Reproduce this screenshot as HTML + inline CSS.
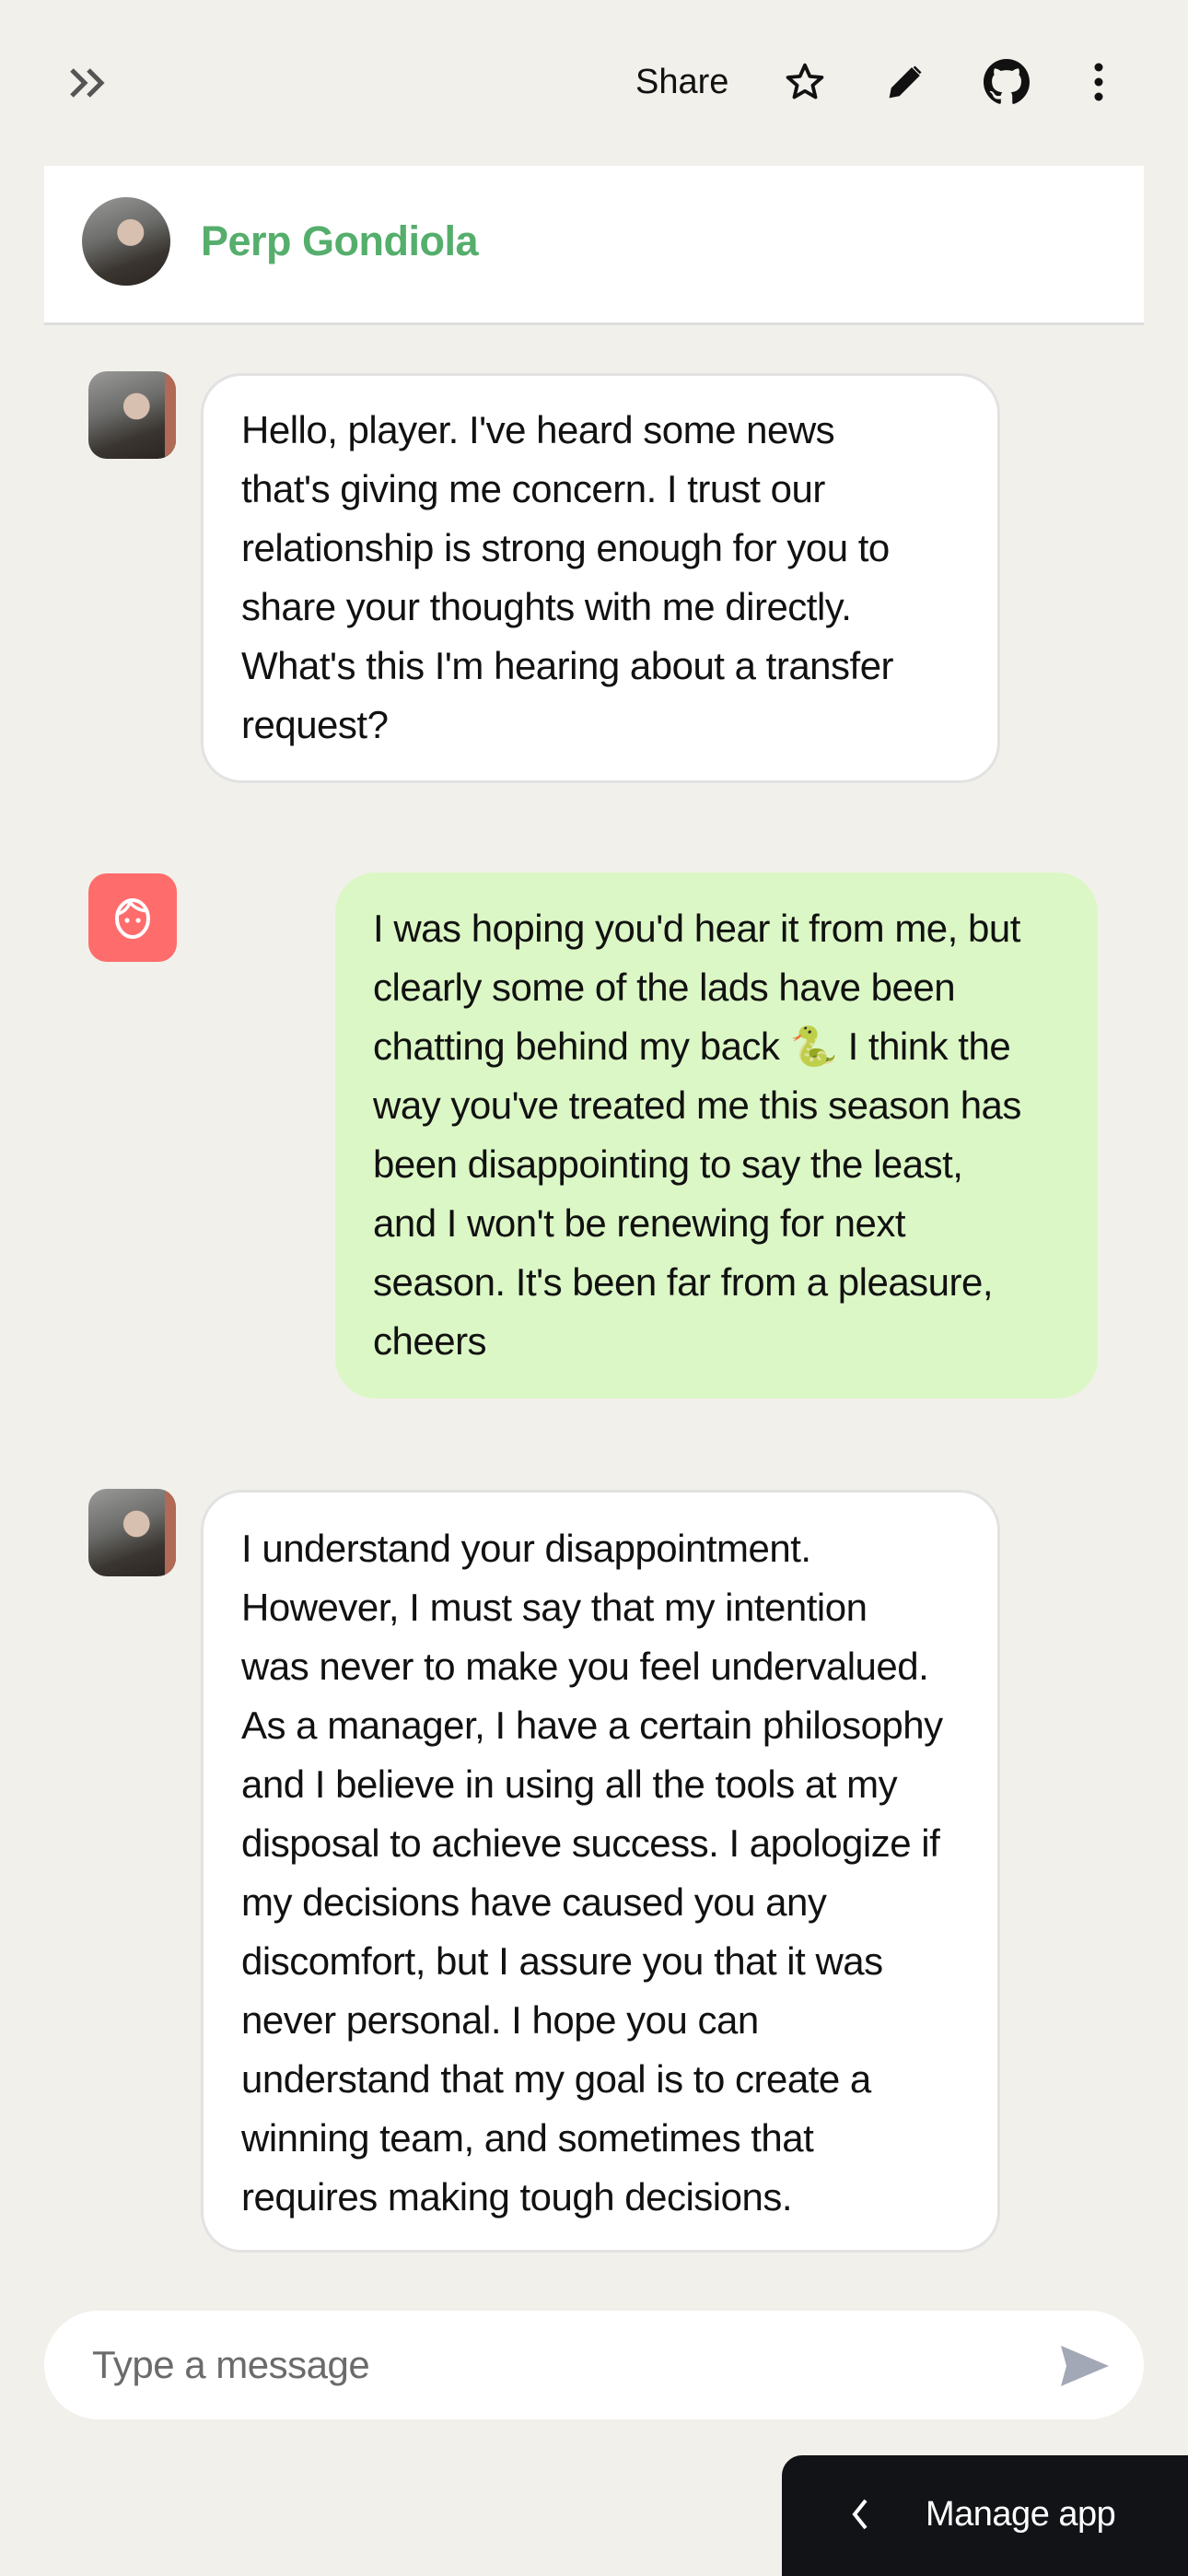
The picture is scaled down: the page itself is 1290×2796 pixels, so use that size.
<!DOCTYPE html>
<html><head><meta charset="utf-8"><style>
*{margin:0;padding:0;box-sizing:border-box}
body{width:1290px;height:2796px;background:#f2f0eb;font-family:"Liberation Sans",sans-serif;position:relative;overflow:hidden;color:#111}
.abs{position:absolute}
.bub{position:absolute;border-radius:44px;font-size:42px;line-height:64px;white-space:nowrap;letter-spacing:-0.5px}
.w{background:#fff;border:3px solid #e2e2e2}
.ph{background:radial-gradient(circle at 55% 40%,#d8c0b0 0 18%,transparent 19%),linear-gradient(160deg,#9a9a98 0%,#6d6e6c 40%,#3a3530 70%,#2a2420 100%);}
.pic{position:absolute;width:95px;height:95px;border-radius:20px;overflow:hidden}
.pic::after{content:"";position:absolute;right:0;top:0;width:12px;height:100%;background:#b06a55}
</style></head><body>
<svg class="abs" style="left:72px;top:72px" width="46" height="36" viewBox="0 0 46 36"><path d="M6 4l14 14-14 14M24 4l14 14-14 14" fill="none" stroke="#555" stroke-width="5"/></svg>
<div class="abs" style="left:690px;top:64px;font-size:38px;line-height:50px">Share</div>
<svg class="abs" style="left:851px;top:66px" width="46" height="46" viewBox="0 0 24 24"><path d="M12 2.5l2.8 6.3 6.8.6-5.2 4.5 1.6 6.7L12 17.1l-6 3.5 1.6-6.7-5.2-4.5 6.8-.6z" fill="none" stroke="#111" stroke-width="2" stroke-linejoin="round"/></svg>
<svg class="abs" style="left:962px;top:68px" width="42" height="42" viewBox="0 0 24 24"><path d="M3 21l1-5L16 4l4 4L8 20z M17.5 2.5l4 4" fill="#111" stroke="#111" stroke-width="1.5"/></svg>
<svg class="abs" style="left:1068px;top:64px" width="50" height="50" viewBox="0 0 16 16"><path fill="#111" d="M8 0C3.58 0 0 3.58 0 8c0 3.540 2.29 6.53 5.47 7.59.4.07.55-.17.55-.38v-1.33c-2.23.48-2.7-1.070-2.7-1.070-.36-.92-.89-1.17-.89-1.17-.73-.5.05-.49.05-.49.8.06 1.23.83 1.23.83.72 1.22 1.87.87 2.33.66.07-.52.28-.87.51-1.07-1.78-.2-3.64-.89-3.64-3.95 0-.87.31-1.59.82-2.15-.08-.2-.36-1.02.08-2.12 0 0 .67-.21 2.2.82a7.6 7.6 0 014 0c1.53-1.04 2.2-.82 2.2-.82.44 1.1.16 1.92.08 2.12.51.56.82 1.27.82 2.15 0 3.07-1.87 3.75-3.65 3.95.29.25.54.73.54 1.48v2.2c0 .21.15.46.55.38A8.01 8.01 0 0016 8c0-4.42-3.58-8-8-8z"/></svg>
<svg class="abs" style="left:1183px;top:66px" width="20" height="46" viewBox="0 0 20 46"><circle cx="10" cy="7" r="4.5" fill="#111"/><circle cx="10" cy="23" r="4.5" fill="#111"/><circle cx="10" cy="39" r="4.5" fill="#111"/></svg>
<div class="abs" style="left:48px;top:180px;width:1194px;height:173px;background:#fff;border-bottom:3px solid #ddd"></div>
<div class="abs ph" style="left:89px;top:214px;width:96px;height:96px;border-radius:50%"></div>
<div class="abs" style="left:218px;top:232px;font-size:45px;font-weight:bold;color:#55ae6c;line-height:60px;letter-spacing:-0.5px">Perp Gondiola</div>
<div class="pic ph" style="left:96px;top:403px"></div>
<div class="bub w" style="left:218px;top:405px;width:868px;height:445px;padding:27px 0 0 41px">Hello, player. I've heard some news<br>that's giving me concern. I trust our<br>relationship is strong enough for you to<br>share your thoughts with me directly.<br>What's this I'm hearing about a transfer<br>request?</div>
<div class="abs" style="left:96px;top:948px;width:96px;height:96px;border-radius:20px;background:#ff6c6c"></div>
<svg class="abs" style="left:118px;top:970px" width="52" height="52" viewBox="0 0 52 52"><ellipse cx="26" cy="27" rx="17" ry="20" fill="none" stroke="#fff" stroke-width="4"/><path d="M10 22c6-2 11-6 13-13M23 9c4 6 10 9 19 10" fill="none" stroke="#fff" stroke-width="3.5"/><circle cx="20" cy="29" r="2.6" fill="#fff"/><circle cx="32" cy="29" r="2.6" fill="#fff"/></svg>
<div class="bub" style="left:364px;top:947px;width:828px;height:571px;background:#dbf7c5;padding:29px 0 0 41px">I was hoping you'd hear it from me, but<br>clearly some of the lads have been<br>chatting behind my back 🐍 I think the<br>way you've treated me this season has<br>been disappointing to say the least,<br>and I won't be renewing for next<br>season. It's been far from a pleasure,<br>cheers</div>
<div class="pic ph" style="left:96px;top:1616px"></div>
<div class="bub w" style="left:218px;top:1617px;width:868px;height:828px;padding:29px 0 0 41px">I understand your disappointment.<br>However, I must say that my intention<br>was never to make you feel undervalued.<br>As a manager, I have a certain philosophy<br>and I believe in using all the tools at my<br>disposal to achieve success. I apologize if<br>my decisions have caused you any<br>discomfort, but I assure you that it was<br>never personal. I hope you can<br>understand that my goal is to create a<br>winning team, and sometimes that<br>requires making tough decisions.</div>
<div class="abs" style="left:48px;top:2508px;width:1194px;height:118px;border-radius:59px;background:#fff"></div>
<div class="abs" style="left:100px;top:2540px;font-size:42px;line-height:54px;color:#6b6b6b;letter-spacing:-0.5px">Type a message</div>
<svg class="abs" style="left:1150px;top:2543px" width="56" height="50" viewBox="0 0 56 50"><path d="M2 3l52 22L2 47l6-22z" fill="#a3a8b6"/></svg>
<div class="abs" style="left:849px;top:2665px;width:441px;height:131px;background:#121317;border-top-left-radius:22px"></div>
<svg class="abs" style="left:922px;top:2710px" width="24" height="38" viewBox="0 0 24 38"><path d="M18 4L6 19l12 15" fill="none" stroke="#fff" stroke-width="4"/></svg>
<div class="abs" style="left:1005px;top:2704px;font-size:38px;line-height:50px;color:#fff;letter-spacing:-0.5px">Manage app</div>
</body></html>
